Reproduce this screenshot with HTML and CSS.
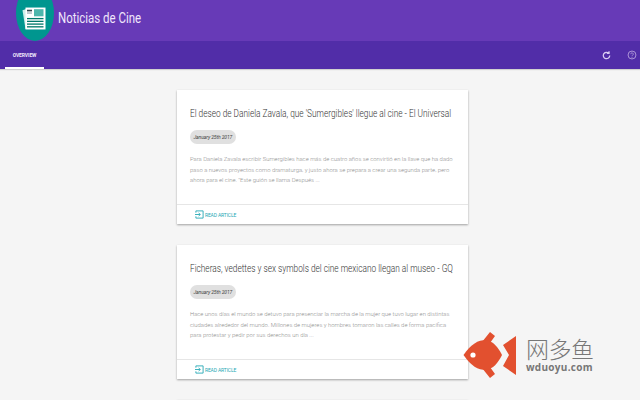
FILE: index.html
```html
<!DOCTYPE html>
<html lang="es">
<head>
<meta charset="utf-8">
<title>Noticias de Cine</title>
<link rel="stylesheet" href="styles.css">
</head>
<body>
<header class="topbar">
  <div class="logo">
    <svg class="logo-icon" viewBox="1 3 24 21" width="24" height="23" preserveAspectRatio="none">
      <path d="M1.5 6 L6 4.5 L6 23 L4.5 23 Z" fill="#cfeeea"/>
      <rect x="4.5" y="3.500" width="20" height="20" fill="#ffffff"/>
      <rect x="6" y="5.500" width="5" height="1.500" fill="#37474f"/>
      <rect x="6" y="8" width="5" height="1" fill="#90a4ae"/>
      <rect x="13" y="5" width="9.500" height="6.500" fill="#4db6ac"/>
      <rect x="6" y="13" width="16.500" height="1.200" fill="#00796b"/>
      <rect x="6" y="15.500" width="16.500" height="1.200" fill="#00796b"/>
      <rect x="6" y="18" width="16.500" height="1.200" fill="#00796b"/>
      <rect x="6" y="20.500" width="16.500" height="1.200" fill="#00796b"/>
    </svg>
  </div>
  <h1 class="app-title">Noticias de Cine</h1>
</header>
<nav class="tabs">
  <a class="tab">OVERVIEW</a>
  <div class="tab-actions">
    <svg class="action" viewBox="0 0 24 24" width="11" height="11"><path d="M19 12a7 7 0 1 1-2.100-5M17.500 2.500v5h-5" fill="none" stroke="#d9ccf2" stroke-width="2.800"/></svg>
    <svg class="action" viewBox="0 0 24 24" width="10" height="10"><circle cx="12" cy="12" r="9.500" fill="none" stroke="#b39ddb" stroke-width="2.200"/><path d="M9 10a3 3 0 1 1 4.500 2.500c-1 .6-1.500 1-1.500 2.500M12 17v2" fill="none" stroke="#b39ddb" stroke-width="2"/></svg>
  </div>
</nav>
<main class="feed">
  <article class="card">
    <div class="card-body">
      <h2 class="card-title">El deseo de Daniela Zavala, que 'Sumergibles' llegue al cine - El Universal</h2>
      <span class="chip">January 25th 2017</span>
      <p class="excerpt">Para Daniela Zavala escribir Sumergibles hace más de cuatro años se convirtió en la llave que ha dado paso a nuevos proyectos como dramaturga, y justo ahora se prepara a crear una segunda parte, pero ahora para el cine. "Este guión se llama Después ...</p>
    </div>
    <div class="card-actions">
      <svg class="read-icon" viewBox="0 0 10 10" width="9" height="9"><path d="M1 3V1h8v8H1V7" fill="none" stroke="#26a9b5" stroke-width="1"/><path d="M0 5h5.500M4 3.300 6 5 4 6.700" fill="none" stroke="#26a9b5" stroke-width="1"/></svg>
      <span class="read-link">READ ARTICLE</span>
    </div>
  </article>
  <article class="card">
    <div class="card-body">
      <h2 class="card-title">Ficheras, vedettes y sex symbols del cine mexicano llegan al museo - GQ</h2>
      <span class="chip">January 25th 2017</span>
      <p class="excerpt">Hace unos días el mundo se detuvo para presenciar la marcha de la mujer que tuvo lugar en distintas ciudades alrededor del mundo. Millones de mujeres y hombres tomaron las calles de forma pacífica para protestar y pedir por sus derechos un día ...</p>
    </div>
    <div class="card-actions">
      <svg class="read-icon" viewBox="0 0 10 10" width="9" height="9"><path d="M1 3V1h8v8H1V7" fill="none" stroke="#26a9b5" stroke-width="1"/><path d="M0 5h5.500M4 3.300 6 5 4 6.700" fill="none" stroke="#26a9b5" stroke-width="1"/></svg>
      <span class="read-link">READ ARTICLE</span>
    </div>
  </article>
  <article class="card"></article>
</main>
<aside class="watermark">
  <svg class="fish" viewBox="0 0 56 48" width="56" height="48">
    <path d="M19 11 L27 1 L32 5 L27 12 Z M19 37 L27 47 L32 43 L27 36 Z" fill="#e2502f"/>
    <path d="M0.500 24 C8 13 15 9 23 9 C30 10 35 16 39 24 C35 32 30 38 23 39 C15 39 8 35 0.500 24 Z" fill="#e2502f"/>
    <path d="M53 5 V44 L40 35 L46 24 L40 14 Z" fill="#e2502f"/>
    <circle cx="10" cy="24" r="2.600" fill="#fff"/>
  </svg>
  <div class="wm-text">
    <span class="wm-cn">网多鱼</span>
    <span class="wm-en">wduoyu.com</span>
  </div>
</aside>
</body>
</html>
```
FILE: styles.css
```css
* { box-sizing: border-box; }
html, body { margin: 0; height: 100%; overflow: hidden; }
body { background: #f5f5f5; font-family: Roboto, sans-serif; width: 640px; height: 400px; position: relative; }
.topbar { height: 41px; background: #673ab7; display: flex; align-items: center; padding-left: 16px; gap: 4px; overflow: hidden; }
.logo { width: 38px; height: 56px; flex: none; align-self: flex-end; border-radius: 50%; background: #00968f; display: flex; align-items: center; justify-content: center; }
.logo-icon { margin-top: 11px; margin-left: -2px; }
.app-title { margin: 0 0 5px; color: #f0e6fb; font-size: 14px; font-weight: 400; white-space: nowrap; transform: scaleX(.82); transform-origin: left; }
.tabs { height: 28px; background: #512da8; display: flex; align-items: stretch; justify-content: space-between; box-shadow: 0 1px 1px rgba(0,0,0,.15); }
.tab { width: 39px; margin-left: 5px; border-bottom: 2px solid #fff; color: #f0e6fb; font-size: 5px; font-weight: 700; letter-spacing: -.1px; display: flex; align-items: center; justify-content: center; padding-top: 1px; }
.tab-actions { display: flex; align-items: center; gap: 15px; padding-right: 3px; }
.feed { padding-top: 21px; display: flex; flex-direction: column; align-items: center; gap: 21px; margin-left: 5px; }
.card { width: 291px; min-height: 134px; background: #fff; box-shadow: 0 1px 2px rgba(0,0,0,.35); flex: none; }
.card-body { padding: 16px 12px 0 13px; height: 115px; border-bottom: 1px solid #e6e6e6; }
.card-title { margin: 0 0 8px; color: #333; font-size: 10.500px; font-weight: 300; line-height: 16px; white-space: nowrap; transform: scaleX(.79); transform-origin: left; }
.chip { display: flex; width: fit-content; align-items: center; height: 14px; padding: 0 3.500px; border-radius: 7px; background: #e0e0e0; color: #444; font-size: 5px; font-style: italic; letter-spacing: -.1px; }
.excerpt { margin: 10px 0 0; color: #8f8f8f; font-size: 5.900px; line-height: 10.500px; font-weight: 300; }
.card-actions { height: 19px; padding-left: 18px; display: flex; align-items: center; gap: 1px; }
.read-link { color: #26a9b5; font-size: 5px; font-weight: 400; letter-spacing: -.15px; }
.watermark { position: absolute; left: 463px; top: 331px; display: flex; align-items: flex-start; gap: 7px; }
.wm-text { display: flex; flex-direction: column; align-items: flex-start; padding-top: 4px; }
.wm-cn { font-family: "Noto Sans CJK SC", sans-serif; font-size: 23px; line-height: 26px; color: #777; letter-spacing: -.5px; font-weight: 300; }
.wm-en { font-family: "Open Sans", sans-serif; font-size: 10px; line-height: 13px; font-weight: 700; color: #777; letter-spacing: .3px; }
```
